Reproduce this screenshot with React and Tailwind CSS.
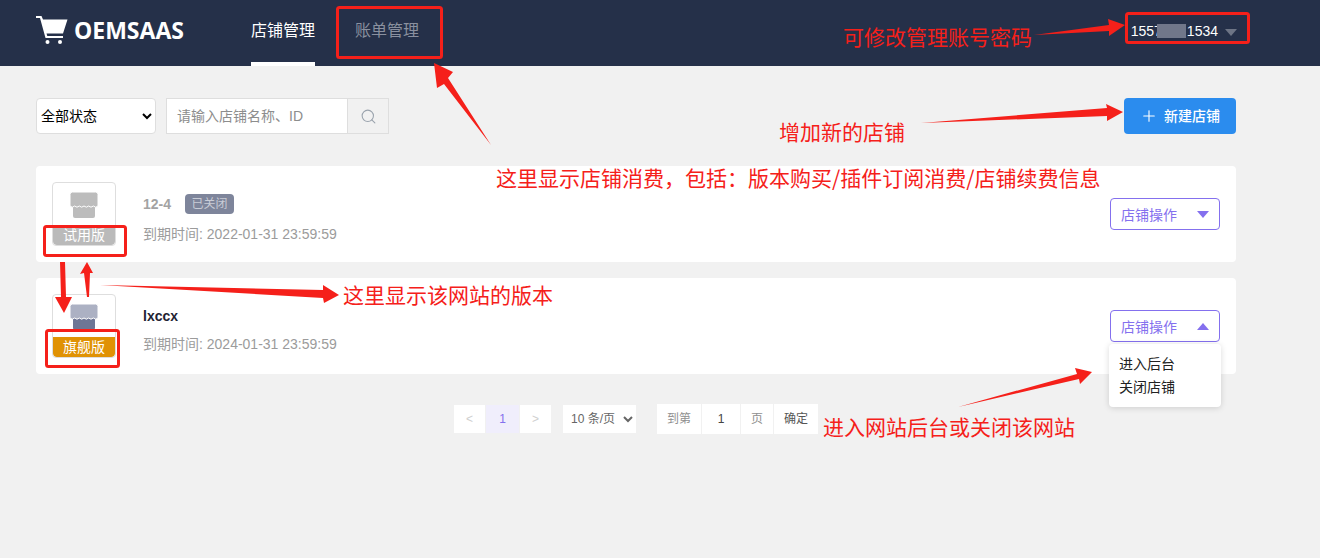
import { Plus, Search } from "lucide-react";

const cjk = "font-['Liberation_Sans','Noto_Sans_CJK_SC',sans-serif]";

function StoreIcon({ top, bottom }) {
  return (
    <svg width="30" height="28" viewBox="0 0 30 28" className="block">
      <rect x="4" y="14" width="22" height="13" rx="2" fill={bottom} />
      <path
        d="M1 3.500Q1 1 3.500 1h23Q29 1 29 3.500V15q-2.300 2.400-4.670 0q-2.300 2.400-4.670 0q-2.300 2.400-4.660 0q-2.300 2.400-4.670 0q-2.300 2.400-4.660 0q-2.300 2.400-4.670 0Z"
        fill={top}
        stroke="#fff"
        strokeWidth="1"
      />
    </svg>
  );
}

function Caret({ up, className }) {
  return <span className={`h-0 w-0 border-x-[6px] border-x-transparent ${up ? "border-b-[7px]" : "border-t-[7px]"} ${className}`} />;
}

function StoreCard({ name, dim, closed, date, badge, badgeBg, top, bottom, open }) {
  return (
    <div className="relative flex h-24 items-center rounded bg-white px-4">
      <div className="flex h-16 w-16 flex-col items-center justify-between overflow-hidden rounded border border-[#dedede] bg-white">
        <div className="pt-[8px]">
          <StoreIcon top={top} bottom={bottom} />
        </div>
        <div className={`flex h-5 w-full shrink-0 items-center justify-center rounded-b text-sm text-white ${badgeBg}`}>{badge}</div>
      </div>
      <div className="ml-[27px] flex flex-1 flex-col self-start pt-7">
        <div className="flex h-5 items-center">
          <span className={`text-sm font-bold ${dim ? "text-[#a3a3a3]" : "text-[#1f2333]"}`}>{name}</span>
          {closed && <span className="ml-[14px] flex h-5 w-[49px] items-center justify-center rounded bg-[#7e859b] text-xs text-[#c9ccd6]">已关闭</span>}
        </div>
        <div className={`text-sm leading-5 text-[#9b9b9b] ${closed ? "mt-[10px]" : "mt-2"}`}>到期时间: {date}</div>
      </div>
      <div className="flex h-8 w-[110px] items-center justify-between rounded-sm border border-[#8470ee] px-[10px] pt-px text-sm text-[#8470ee]">
        店铺操作
        <Caret up={open} className={open ? "border-b-[#8470ee]" : "border-t-[#8470ee]"} />
      </div>
      {open && (
        <div className="absolute right-[15px] top-[66px] z-10 flex h-[63px] w-28 flex-col justify-center gap-1 rounded bg-white pl-[10px] pt-[1px] text-sm leading-[19px] text-[#222] shadow-[0_1px_6px_rgba(0,0,0,0.15)]">
          <span>进入后台</span>
          <span>关闭店铺</span>
        </div>
      )}
    </div>
  );
}

function Note({ className, children }) {
  return <span className={`absolute whitespace-nowrap text-[21px] leading-[30px] text-[#f5201a] ${className}`}>{children}</span>;
}

export default function App() {
  return (
    <div className={`relative h-[558px] w-[1320px] overflow-hidden bg-[#f1f1f1] ${cjk}`}>
      {/* Header */}
      <header className="flex h-[66px] items-stretch bg-[#253049] pl-9 pr-[83px]">
        <div className="flex w-[215px] items-center pb-[6px]">
          <svg width="32" height="30" viewBox="0 0 32 30" fill="#fff">
            <path d="M0 1h5.500l1.500 3.500h24.500L27 18.500H10.500l.8 2.500H27v2H9.500L4 3H0Z" />
            <circle cx="11.500" cy="27" r="2" />
            <circle cx="24" cy="27" r="2" />
          </svg>
          <span className="ml-[6px] font-['Open_Sans',sans-serif] text-[23px] font-bold text-white">OEMSAAS</span>
        </div>
        <nav className="flex gap-10">
          <a className="flex items-center border-b-4 border-white text-base text-white">店铺管理</a>
          <a className="flex items-center border-b-4 border-transparent text-base text-[#8a909f]">账单管理</a>
        </nav>
        <div className="ml-auto flex items-center pb-1 text-sm text-white">
          <span>1557</span>
          <span className="-ml-[5px] h-[14px] w-[29px] bg-[#71778a]" />
          <span className="ml-px">1534</span>
          <Caret className="ml-[7px] mt-[3px] border-t-[#6d7485]" />
        </div>
      </header>

      {/* Toolbar */}
      <div className="mt-8 flex h-9 items-center pl-9 pr-[84px]">
        <select className="h-9 w-[120px] rounded-sm border border-[#dedede] bg-white text-sm text-black">
          <option>全部状态</option>
        </select>
        <div className="ml-[10px] flex h-9 w-[223px]">
          <div className="flex w-[182px] items-center border border-[#dedede] bg-white pl-[10px] text-sm text-[#8d8d8d]">请输入店铺名称、ID</div>
          <div className="flex flex-1 items-center justify-center border border-l-0 border-[#dedede] bg-[#f1f1f1]">
            <Search size={17} strokeWidth={1.5} className="text-[#9aa3ad]" />
          </div>
        </div>
        <button className="ml-auto flex h-9 w-28 items-center justify-center gap-[6px] rounded-sm bg-[#2b8cee] text-sm font-medium text-white">
          <Plus size={18} strokeWidth={1.5} />
          新建店铺
        </button>
      </div>

      {/* Store list */}
      <div className="mt-8 flex flex-col gap-4 pl-9 pr-[84px]">
        <StoreCard name="12-4" dim closed date="2022-01-31 23:59:59" badge="试用版" badgeBg="bg-[#bababa]" top="#bcbcbc" bottom="#bcbcbc" />
        <StoreCard name="lxccx" date="2024-01-31 23:59:59" badge="旗舰版" badgeBg="bg-[#e09204]" top="#acb1c3" bottom="#6e7695" open />
      </div>

      {/* Pagination */}
      <div className="mt-[31px] flex h-7 items-center pl-[454px] text-xs text-[#8f8f8f]">
        <div className="flex h-7 gap-px">
          <span className="flex w-[31px] items-center justify-center bg-white text-[#cfcfcf]">&lt;</span>
          <span className="flex w-[33px] items-center justify-center bg-[#f0eefc] text-[#8470ee]">1</span>
          <span className="flex w-[31px] items-center justify-center bg-white text-[#cfcfcf]">&gt;</span>
        </div>
        <select className="ml-3 h-7 w-[73px] bg-white pl-1 text-xs text-[#666]">
          <option>10 条/页</option>
        </select>
        <div className="ml-[21px] flex h-[30px] gap-px">
          <span className="flex w-11 items-center justify-center bg-white">到第</span>
          <span className="flex w-[38px] items-center justify-center bg-white text-[#444]">1</span>
          <span className="flex w-8 items-center justify-center bg-white">页</span>
          <span className="flex w-11 items-center justify-center bg-white text-[#555]">确定</span>
        </div>
      </div>

      {/* Red annotations drawn over the page */}
      <svg width="1320" height="558" className="pointer-events-none absolute left-0 top-0 z-20">
        <g fill="none" stroke="#f5201a" strokeWidth="3">
          <rect x="337.500" y="7.500" width="104" height="50" rx="2" />
          <rect x="1126.500" y="13.500" width="122" height="29" rx="2" />
          <rect x="44.500" y="226.500" width="81" height="29" rx="2" />
          <rect x="46.500" y="330.500" width="72" height="36" rx="2" />
        </g>
        <g fill="#f5201a">
          <path d="M491 145L444 84L437 88L434 63L453 72L448 78Z" />
          <path d="M1034 35L1109 25L1108 19L1125 25L1109 36L1109 31Z" />
          <path d="M921 123L1107 108L1106 104L1123 112L1107 121L1107 116Z" />
          <path d="M60 262L65 262L66 297L72 297L64 313L55 297L61 297Z" />
          <path d="M87 262L93 273L90 273L89 297L87 297L84 273L80 274Z" />
          <path d="M100 285L323 290L323 285L339 295L324 303L323 298Z" />
          <path d="M958 407L1077 374L1075 368L1092 372L1080 384L1079 379Z" />
        </g>
      </svg>
      <div className="pointer-events-none absolute left-0 top-0 z-30 h-full w-full font-['Noto_Sans_CJK_SC',sans-serif]">
        <Note className="left-[843px] top-[21px]">可修改管理账号密码</Note>
        <Note className="left-[779px] top-[116px]">增加新的店铺</Note>
        <Note className="left-[496px] top-[162px]">这里显示店铺消费，包括：版本购买/插件订阅消费/店铺续费信息</Note>
        <Note className="left-[343px] top-[279px]">这里显示该网站的版本</Note>
        <Note className="left-[823px] top-[411px]">进入网站后台或关闭该网站</Note>
      </div>
    </div>
  );
}
